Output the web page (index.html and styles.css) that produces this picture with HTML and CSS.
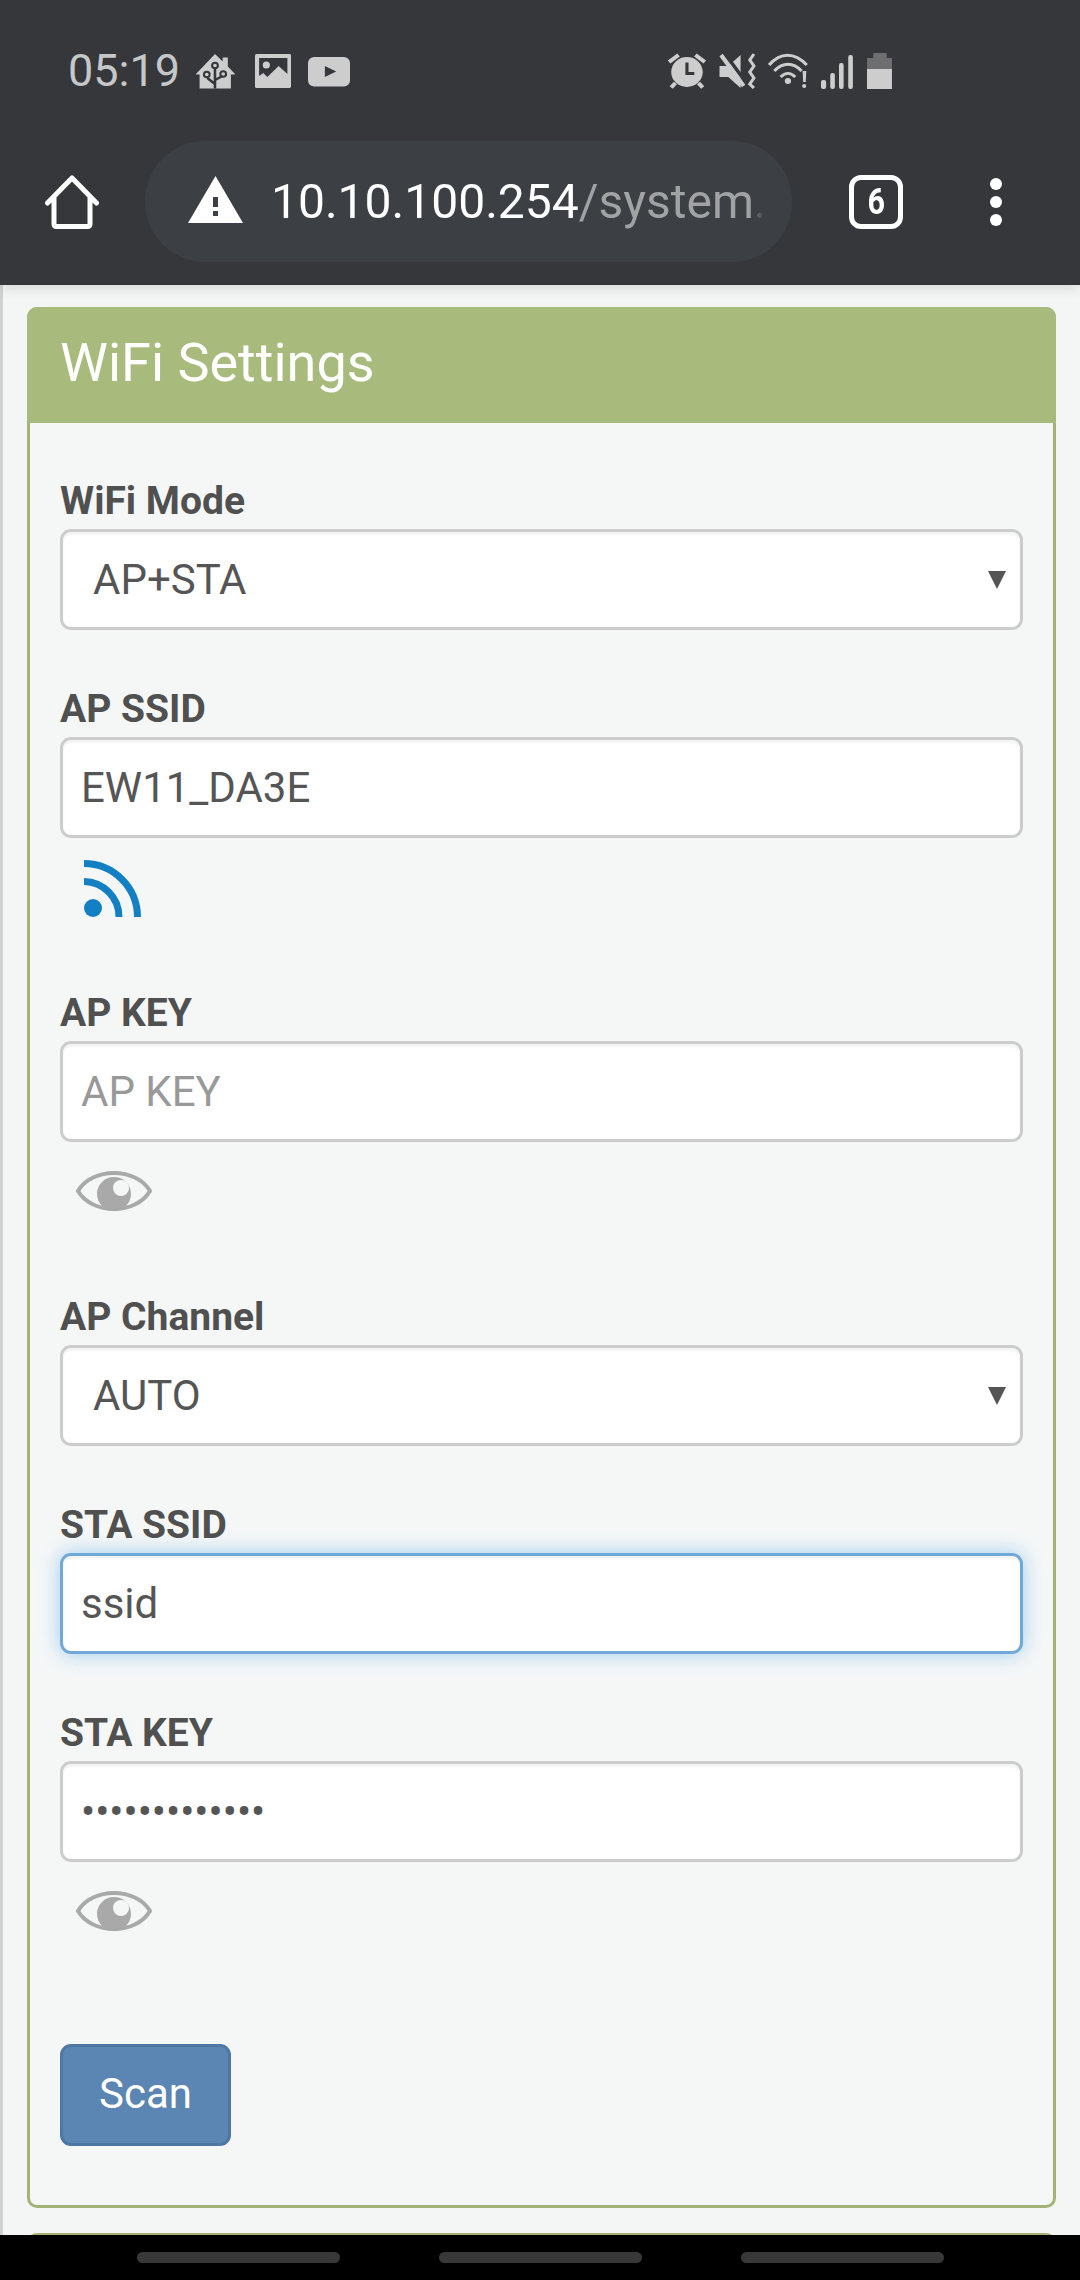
FILE: index.html
```html
<!DOCTYPE html>
<html lang="en">
<head>
    <meta charset="UTF-8">
    <meta name="viewport" content="width=device-width, initial-scale=1.0">
    <title>WiFi Settings</title>
    <link rel="stylesheet" href="styles.css">
</head>
<body>
    <header class="browser-bar">
        <div class="status-row">
            <span class="clock">05:19</span>
            <!-- notification icons -->
            <svg class="ico-home-assistant" viewBox="190 53 38 36" preserveAspectRatio="none">
                <path class="fill-light" d="M208.500 54 L216 61.500 V57.500 H221 V66.500 L228.500 74.500 H224 V88.500 H193.500 V74.500 H189.500 Z"/>
                <path class="cut" d="M208.500 88.500 V69 M208.500 84 L201 78 M208.500 80 L216 76"/>
                <circle class="ring" cx="208.500" cy="65.500" r="2.800"/>
                <circle class="ring" cx="200.500" cy="74.500" r="2.800"/>
                <circle class="ring" cx="216.500" cy="74" r="2.800"/>
            </svg>
            <svg class="ico-image" viewBox="246 53 35 36" preserveAspectRatio="none">
                <rect class="fill-light" x="246" y="54" width="35" height="34" rx="1.500"/>
                <path class="fill-dark" d="M250 58 H277.500 V74 L269 66 L258 77 L254 73 L250 76 Z"/>
                <circle class="fill-light" cx="257" cy="65" r="3.500"/>
            </svg>
            <svg class="ico-youtube" viewBox="298 53 41 36" preserveAspectRatio="none">
                <rect class="fill-light" x="298" y="57" width="41" height="29.500" rx="6"/>
                <path class="fill-dark" d="M314.500 66 L325.500 71.500 L314.500 77 Z"/>
            </svg>
            <div class="status-right">
                <svg class="ico-alarm" viewBox="663 53 40 36" preserveAspectRatio="none">
                    <circle class="fill-light" cx="682" cy="72" r="15"/>
                    <path class="hand" d="M682 62.500 V73.500 H689"/>
                    <path class="ear" d="M665 62 L674 55 M699 62 L690 55 M671 83 L667 87.500 M693 83 L697 87.500"/>
                </svg>
                <svg class="ico-mute" viewBox="713 53 37 36" preserveAspectRatio="none">
                    <path class="fill-light" d="M713.500 66 H722 L734 55 V88 L722 77 H713.500 Z"/>
                    <path class="slash-gap" d="M719 54 L741 85"/>
                    <path class="slash" d="M715 55 L737 86"/>
                    <path class="wave" d="M747 54 L743 60 L747 66 L743 72 L747 78 L743 84 L747 88"/>
                </svg>
                <svg class="ico-wifi" viewBox="760 53 42 36" preserveAspectRatio="none">
                    <path class="arc" d="M762 65 C773 52 786 52 798 65"/>
                    <path class="arc" d="M767 71 C775 62 785 62 793 71"/>
                    <path class="arc" d="M773 77 C778 72 782 72 787 77"/>
                    <circle class="fill-light" cx="780" cy="81" r="3"/>
                    <path class="fill-light" d="M794 71 H797.500 L797 82 H794.500 Z"/>
                    <circle class="fill-light" cx="795.500" cy="86" r="2"/>
                </svg>
                <svg class="ico-signal" viewBox="812 53 35 36" preserveAspectRatio="none">
                    <rect class="fill-light" x="812" y="80" width="5" height="9" rx="2"/>
                    <rect class="fill-light" x="821" y="73" width="4.500" height="16" rx="2"/>
                    <rect class="fill-light" x="829.500" y="63" width="4.500" height="26" rx="2"/>
                    <rect class="fill-light" x="838.500" y="55" width="4.500" height="34" rx="2"/>
                </svg>
                <svg class="ico-battery" viewBox="857 53 25 36" preserveAspectRatio="none">
                    <path class="fill-mid" d="M863 53 H876 V58 H881 V69 H857 V58 H863 Z"/>
                    <rect class="fill-light" x="857" y="69" width="24" height="20"/>
                </svg>
            </div>
        </div>
        <div class="toolbar">
            <svg class="ico-toolbar-home" viewBox="0 0 54 54">
                <path d="M2.500 28 L27 3 L51.500 28 M9 22 V49 Q9 51.500 11.500 51.500 H42.500 Q45 51.500 45 49 V22"/>
            </svg>
            <div class="url-pill">
                <svg class="ico-warning" viewBox="0 0 55 48">
                    <path class="warn-tri" d="M27.500 0 L55 47 H0 Z"/>
                    <rect class="warn-mark" x="25" y="21" width="5" height="10"/>
                    <rect class="warn-mark" x="25" y="35" width="5" height="5"/>
                </svg>
                <div class="url-text">10.10.100.254<span class="url-path">/system.html</span></div>
            </div>
            <div class="tab-count"><span>6</span></div>
            <div class="kebab"><i></i><i></i><i></i></div>
        </div>
    </header>

    <main class="page">
        <section class="panel">
            <h2 class="panel-title">WiFi Settings</h2>
            <form class="panel-body">
                <div class="form-group">
                    <label>WiFi Mode</label>
                    <div class="select-wrap">
                        <select class="form-control">
                            <option>AP+STA</option>
                        </select>
                    </div>
                </div>

                <div class="form-group">
                    <label>AP SSID</label>
                    <input class="form-control" type="text" value="EW11_DA3E">
                    <div class="icon-row">
                        <svg class="ico-rss" viewBox="84 860 58 58">
                            <path class="rss-arc" d="M84 863.500 A53.500 53.500 0 0 1 137.500 917"/>
                            <path class="rss-arc" d="M84 881.500 A35.500 35.500 0 0 1 119 917"/>
                            <circle class="rss-dot" cx="93" cy="908" r="9"/>
                        </svg>
                    </div>
                </div>

                <div class="form-group">
                    <label>AP KEY</label>
                    <input class="form-control" type="text" placeholder="AP KEY">
                    <div class="icon-row icon-row-eye">
                        <svg class="ico-eye" viewBox="0 0 76 46">
                            <path class="eye-outline" d="M2 23 C16 -1 60 -1 74 23 C60 47 16 47 2 23 Z"/>
                            <circle class="eye-pupil" cx="38" cy="26" r="17"/>
                            <circle class="eye-glint" cx="45" cy="20" r="8"/>
                        </svg>
                    </div>
                </div>

                <div class="form-group">
                    <label>AP Channel</label>
                    <div class="select-wrap">
                        <select class="form-control">
                            <option>AUTO</option>
                        </select>
                    </div>
                </div>

                <div class="form-group">
                    <label>STA SSID</label>
                    <input class="form-control is-focused" type="text" value="ssid">
                </div>

                <div class="form-group">
                    <label>STA KEY</label>
                    <input class="form-control" type="password" value="1234567890123">
                    <div class="icon-row icon-row-eye">
                        <svg class="ico-eye" viewBox="0 0 76 46">
                            <path class="eye-outline" d="M2 23 C16 -1 60 -1 74 23 C60 47 16 47 2 23 Z"/>
                            <circle class="eye-pupil" cx="38" cy="26" r="17"/>
                            <circle class="eye-glint" cx="45" cy="20" r="8"/>
                        </svg>
                    </div>
                </div>

                <button class="btn-scan" type="button">Scan</button>
            </form>
        </section>
        <section class="panel panel-next"></section>
    </main>

    <nav class="nav-bar">
        <span class="nav-pill"></span>
        <span class="nav-pill"></span>
        <span class="nav-pill"></span>
    </nav>
</body>
</html>
```
FILE: styles.css
```css
* {
    box-sizing: border-box;
}

html, body {
    margin: 0;
    height: 2280px;
    overflow: hidden;
}

body {
    display: flex;
    flex-direction: column;
    font-family: Roboto, "Noto Sans", sans-serif;
    background: #f4f6f6;
    color: #555;
}

/* browser chrome */
.browser-bar {
    flex: none;
    height: 285px;
    background: #36373b;
    box-shadow: 0 3px 12px rgba(0, 0, 0, 0.12);
    position: relative;
    z-index: 2;
}

.status-row {
    height: 141px;
    padding: 53px 187px 52px 68px;
    display: flex;
    align-items: center;
}

.clock {
    font-size: 45px;
    line-height: 36px;
    color: #c6c7c8;
    margin-right: 16px;
}

.status-row svg {
    display: block;
    height: 36px;
}

.ico-home-assistant { width: 39px; margin-right: 20px; }
.ico-image { width: 36px; margin-right: 17px; }
.ico-youtube { width: 42px; }
.status-row .ico-alarm { width: 42px; }
.status-row .ico-mute { width: 38px; }
.status-row .ico-wifi { width: 44px; }
.status-row .ico-signal { width: 36px; }
.status-row .ico-battery { width: 26px; }

.status-right {
    margin-left: auto;
    display: flex;
    gap: 10px;
}

.fill-light { fill: #cdcdcd; }
.fill-dark { fill: #36373b; }
.fill-mid { fill: #6e6e71; }

.cut, .hand {
    fill: none;
    stroke: #36373b;
    stroke-width: 2.500;
}

.hand { stroke-width: 3; }

.ring {
    fill: #cdcdcd;
    stroke: #36373b;
    stroke-width: 2;
}

.ear, .slash, .wave, .arc {
    fill: none;
    stroke: #cdcdcd;
    stroke-width: 3;
}

.ear { stroke-width: 4; }

.slash {
    stroke-width: 4;
}

.slash-gap {
    fill: none;
    stroke: #36373b;
    stroke-width: 3.500;
}

.toolbar {
    height: 144px;
    padding: 0 0 23px 45px;
    display: flex;
    align-items: center;
}

.ico-toolbar-home {
    width: 54px;
    height: 54px;
    flex: none;
    fill: none;
    stroke: #fff;
    stroke-width: 5;
    stroke-linecap: round;
    stroke-linejoin: round;
}

.url-pill {
    width: 647px;
    height: 121px;
    margin-left: 46px;
    padding-left: 43px;
    border-radius: 60px;
    background: #3c3f44;
    display: flex;
    align-items: center;
}

.ico-warning {
    width: 55px;
    height: 48px;
    flex: none;
    margin-top: -4px;
}

.warn-tri { fill: #fff; }
.warn-mark { fill: #3c3f44; }

.url-text {
    margin-left: 28px;
    width: 493px;
    font-size: 48px;
    line-height: 60px;
    color: #fff;
    white-space: nowrap;
    overflow: hidden;
    -webkit-mask-image: linear-gradient(to right, #000 97%, transparent 100%);
    mask-image: linear-gradient(to right, #000 97%, transparent 100%);
}

.url-path {
    color: #a0a2a4;
}

.tab-count {
    width: 54px;
    height: 54px;
    margin-left: 57px;
    border: 5px solid #fff;
    border-radius: 12px;
    flex: none;
    display: flex;
    align-items: center;
    justify-content: center;
    color: #fff;
    font-size: 36px;
    font-weight: 700;
}

.tab-count span {
    display: block;
    transform: scaleX(0.85);
}

.kebab {
    margin-left: 87px;
    display: flex;
    flex-direction: column;
    gap: 6px;
}

.kebab i {
    display: block;
    width: 12px;
    height: 12px;
    border-radius: 50%;
    background: #fff;
}

/* page content */
.page {
    flex: 1;
    min-height: 0;
    overflow: hidden;
    padding: 22px 24px 0 24px;
    border-left: 3px solid #cfd2d2;
}

.panel {
    border: 3px solid #a3b378;
    border-radius: 10px;
    background: #f5f7f7;
    margin-bottom: 25px;
}

.panel-title {
    margin: -3px -3px 0;
    padding: 0 33px;
    height: 116px;
    background: #a9bb7c;
    border-radius: 10px 10px 0 0;
    color: #fff;
    font-size: 54px;
    font-weight: 400;
    line-height: 112px;
}

.panel-body {
    padding: 57px 30px 59px;
}

.form-group {
    margin-bottom: 58px;
}

.form-group label {
    display: block;
    font-size: 39px;
    font-weight: 700;
    line-height: 42px;
    margin-bottom: 7px;
    color: #505050;
}

.form-control {
    display: block;
    width: 100%;
    height: 101px;
    padding: 0 18px;
    border: 3px solid #ccc;
    border-radius: 11px;
    background: #fff;
    box-shadow: inset 0 3px 3px rgba(0, 0, 0, 0.05);
    font-family: inherit;
    font-size: 42px;
    color: #555;
    outline: none;
}

.form-control::placeholder {
    color: #999;
    opacity: 1;
}

.form-control.is-focused {
    border-color: #70a8d8;
    box-shadow: inset 0 3px 3px rgba(0, 0, 0, 0.05), 0 0 20px rgba(102, 175, 233, 0.6);
}

select.form-control {
    appearance: none;
    -webkit-appearance: none;
    padding-left: 30px;
}

.select-wrap {
    position: relative;
}

/* down arrow of the select */
.select-wrap::after {
    content: "";
    position: absolute;
    top: 42px;
    right: 17px;
    border-style: solid;
    border-width: 18px 9px 0;
    border-color: #555 transparent transparent;
}

.icon-row {
    height: 96px;
    padding: 22px 0 0 24px;
}

.icon-row-eye {
    padding: 26px 0 0 16px;
}

.ico-rss {
    display: block;
    width: 58px;
    height: 58px;
}

.rss-arc {
    fill: none;
    stroke: #1380c4;
    stroke-width: 7;
}

.rss-dot { fill: #1380c4; }

.ico-eye {
    display: block;
    width: 76px;
    height: 46px;
}

.eye-outline {
    fill: none;
    stroke: #a9a9a9;
    stroke-width: 4;
}

.eye-pupil { fill: #a9a9a9; }
.eye-glint { fill: #f5f7f7; }

.btn-scan {
    display: block;
    width: 171px;
    height: 102px;
    margin-top: 86px;
    padding: 0 0 3px;
    border: 3px solid #4f77a3;
    border-radius: 11px;
    background: #5b85b2;
    color: #fff;
    font-family: inherit;
    font-size: 42px;
}

.form-group:has(+ .btn-scan) {
    margin-bottom: 0;
}

.panel-next {
    height: 60px;
    margin-bottom: 0;
}

/* system navigation */
.nav-bar {
    flex: none;
    height: 45px;
    background: #000;
    display: flex;
    justify-content: center;
    gap: 99px;
    padding-top: 17px;
}

.nav-pill {
    width: 203px;
    height: 11px;
    border-radius: 6px;
    background: #383838;
}
```
